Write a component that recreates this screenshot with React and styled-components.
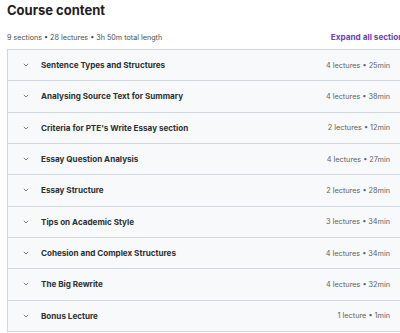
import React from "react";
import styled, { createGlobalStyle } from "styled-components";

const Global = createGlobalStyle`
  html, body { margin: 0; padding: 0; background: #fff; overflow: hidden; }
  body { font-family: Inter, "Noto Sans", "Liberation Sans", sans-serif; color: #2d2f31; }
`;

const Page = styled.div`
  width: 401px;
  padding: 2px 0 0 7px;
`;

const Title = styled.h2`
  margin: 0;
  font-size: 13px;
  line-height: 16px;
  font-weight: 700;
  color: #1f2023;
`;

const MetaBar = styled.div`
  display: flex;
  justify-content: space-between;
  align-items: center;
  height: 16px;
  margin-top: 11px;
  margin-bottom: 4px;
`;

const Meta = styled.span`
  font-size: 7.2px;
  color: #4a4d50;
`;

const Expand = styled.span`
  font-size: 8.2px;
  font-weight: 700;
  color: #6a3fc4;
  white-space: nowrap;
`;

const Box = styled.div`
  border: 1px solid #d1d7dc;
  border-top: none;
`;

const Row = styled.div`
  display: flex;
  align-items: center;
  box-sizing: border-box;
  height: 31.33px;
  border-top: 1px solid #d1d7dc;
  background: #f7f9fa;
  padding: 0 17px 0 15px;
`;

const Chevron = styled.svg`
  width: 6px;
  height: 4px;
  flex: none;
  margin-right: 12px;
`;

const SectionTitle = styled.span`
  flex: 1;
  font-size: 8.1px;
  font-weight: 700;
  color: #2d2f31;
`;

const Info = styled.span`
  font-size: 7.3px;
  color: #5f6367;
  white-space: nowrap;
`;

const sections = [
  ["Sentence Types and Structures", "4 lectures • 25min"],
  ["Analysing Source Text for Summary", "4 lectures • 38min"],
  ["Criteria for PTE's Write Essay section", "2 lectures • 12min"],
  ["Essay Question Analysis", "4 lectures • 27min"],
  ["Essay Structure", "2 lectures • 28min"],
  ["Tips on Academic Style", "3 lectures • 34min"],
  ["Cohesion and Complex Structures", "4 lectures • 34min"],
  ["The Big Rewrite", "4 lectures • 32min"],
  ["Bonus Lecture", "1 lecture • 1min"],
];

export default function App() {
  return (
    <Page>
      <Global />
      <Title>Course content</Title>
      <MetaBar>
        <Meta>9 sections • 28 lectures • 3h 50m total length</Meta>
        <Expand>Expand all sections</Expand>
      </MetaBar>
      <Box>
        {sections.map(([t, i]) => (
          <Row key={t}>
            <Chevron viewBox="0 0 6 4">
              <path d="M0.8 0.8 L3 3 L5.2 0.8" fill="none" stroke="#6a6f73" strokeWidth="0.9" />
            </Chevron>
            <SectionTitle>{t}</SectionTitle>
            <Info>{i}</Info>
          </Row>
        ))}
      </Box>
    </Page>
  );
}
